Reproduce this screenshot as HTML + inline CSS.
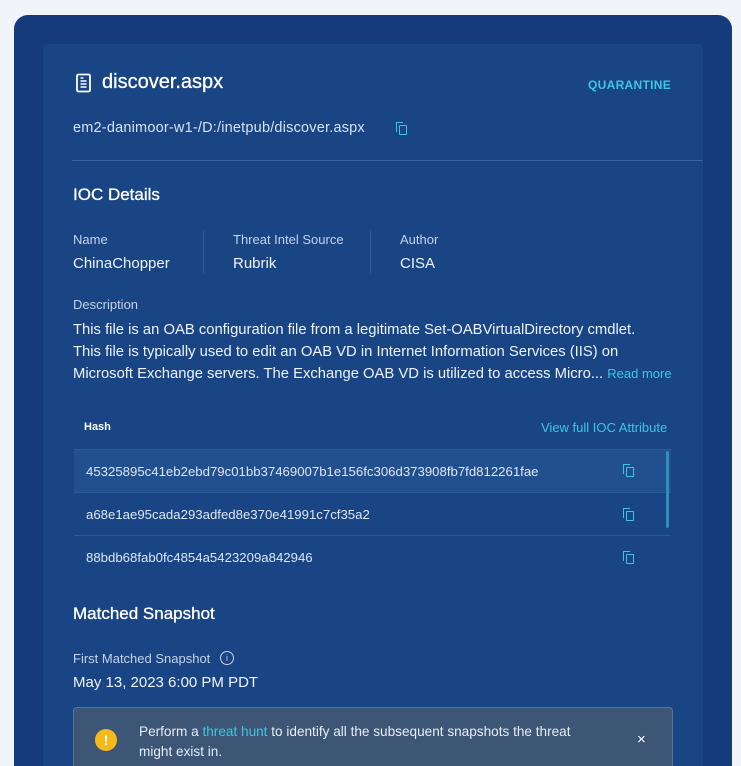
<!DOCTYPE html>
<html><head><meta charset="utf-8"><style>
*{margin:0;padding:0;box-sizing:border-box}
html,body{width:741px;height:766px;overflow:hidden}
body{background:#f1f5fa;font-family:"Liberation Sans","DejaVu Sans",sans-serif;color:#fff;position:relative}
.outer{position:absolute;left:14px;top:15px;width:718px;height:751px;background:#163b7c;border-radius:14px 14px 0 0}
.inner{position:absolute;left:43px;top:44px;width:660px;height:722px;background:#1a4585;border-radius:4px 4px 0 0}
.a{position:absolute;white-space:nowrap}
.lbl{color:#c5d2e6;font-size:13px}
.val{font-size:15px;color:#eef3fa}
.cy{color:#3ec6e0}
.copy{position:absolute;width:8px;height:10px;border:1.5px solid #3ec6e0;border-radius:1px}
.copy:before{content:"";position:absolute;left:-4px;top:-4px;width:6px;height:9px;border-left:1.5px solid #3ec6e0;border-top:1.5px solid #3ec6e0}
.row{position:absolute;left:74px;width:597px;height:43px;font-size:13.2px;color:#dde6f2;padding:14px 12px;border-bottom:1px solid #2b5a9a}
.sep{position:absolute;width:1px;height:42px;background:#2e5c9c}
</style></head><body>
<div class="outer"></div>
<div class="inner"></div>
<svg class="a" style="left:75px;top:73px" width="18" height="20" viewBox="0 0 18 20"><rect x="2" y="1.5" width="13" height="17" rx="1.5" fill="none" stroke="#fff" stroke-width="1.8"/><path d="M5.5 8h6M5.5 11h6M5.5 14h6M5.5 5h3" stroke="#fff" stroke-width="1.6"/></svg>
<div class="a" style="left:102px;top:71px;font-size:20px;-webkit-text-stroke:.3px #fff">discover.aspx</div>
<div class="a cy" style="left:588px;top:78px;font-size:12px;font-weight:bold;letter-spacing:.3px">QUARANTINE</div>
<div class="a val" style="left:73px;top:120px;font-size:14.5px;color:#d8e2f0;letter-spacing:.2px">em2-danimoor-w1-/D:/inetpub/discover.aspx</div>
<div class="copy" style="left:399px;top:125px"></div>
<div class="a" style="left:72px;top:160px;width:631px;height:1px;background:#3566a6"></div>
<div class="a" style="left:73px;top:185px;font-size:17px;-webkit-text-stroke:.3px #fff">IOC Details</div>
<div class="a lbl" style="left:73px;top:232px">Name</div>
<div class="a val" style="left:73px;top:255px">ChinaChopper</div>
<div class="sep" style="left:203px;top:231px"></div>
<div class="a lbl" style="left:233px;top:232px">Threat Intel Source</div>
<div class="a val" style="left:233px;top:255px">Rubrik</div>
<div class="sep" style="left:370px;top:231px"></div>
<div class="a lbl" style="left:400px;top:232px">Author</div>
<div class="a val" style="left:400px;top:255px">CISA</div>
<div class="a lbl" style="left:73px;top:297px">Description</div>
<div class="a" style="left:73px;top:319px;font-size:14.8px;line-height:22px;color:#eef3fa;white-space:normal;width:640px">This file is an OAB configuration file from a legitimate Set-OABVirtualDirectory cmdlet.<br>This file is typically used to edit an OAB VD in Internet Information Services (IIS) on<br>Microsoft Exchange servers. The Exchange OAB VD is utilized to access Micro... <span class="cy" style="font-size:13px">Read more</span></div>
<div class="a" style="left:84px;top:421px;font-size:11px;font-weight:bold">Hash</div>
<div class="a cy" style="left:541px;top:420px;font-size:13px">View full IOC Attribute</div>
<div class="a" style="left:74px;top:449px;width:597px;height:1px;background:#2d5c9c"></div>
<div class="row" style="top:450px;background:#22508f">45325895c41eb2ebd79c01bb37469007b1e156fc306d373908fb7fd812261fae</div>
<div class="row" style="top:493px">a68e1ae95cada293adfed8e370e41991c7cf35a2</div>
<div class="row" style="top:536px;border-bottom:none">88bdb68fab0fc4854a5423209a842946</div>
<div class="copy" style="left:626px;top:467px"></div>
<div class="copy" style="left:626px;top:511px"></div>
<div class="copy" style="left:626px;top:554px"></div>
<div class="a" style="left:666px;top:451px;width:3px;height:77px;background:#2f8fb8;border-radius:2px"></div>
<div class="a" style="left:73px;top:604px;font-size:17px;-webkit-text-stroke:.3px #fff">Matched Snapshot</div>
<div class="a lbl" style="left:73px;top:651px">First Matched Snapshot</div>
<div class="a" style="left:220px;top:651px;width:14px;height:14px;border:1.3px solid #c5d2e6;border-radius:50%;font-size:9px;text-align:center;line-height:12px;color:#c5d2e6">i</div>
<div class="a val" style="left:73px;top:674px">May 13, 2023 6:00 PM PDT</div>
<div class="a" style="left:73px;top:707px;width:600px;height:59px;background:#3e5675;border:1px solid #5d7190;border-bottom:none;border-radius:4px 4px 0 0"></div>
<div class="a" style="left:95px;top:729px;width:22px;height:22px;border-radius:50%;background:#f6b91c;color:#fff;font-weight:bold;font-size:14px;text-align:center;line-height:22px">!</div>
<div class="a" style="left:139px;top:722px;font-size:13.6px;line-height:20px;color:#e6edf6">Perform a <span class="cy">threat hunt</span> to identify all the subsequent snapshots the threat<br>might exist in.</div>
<div class="a" style="left:637px;top:731px;font-size:15px;color:#fff">×</div>
</body></html>
